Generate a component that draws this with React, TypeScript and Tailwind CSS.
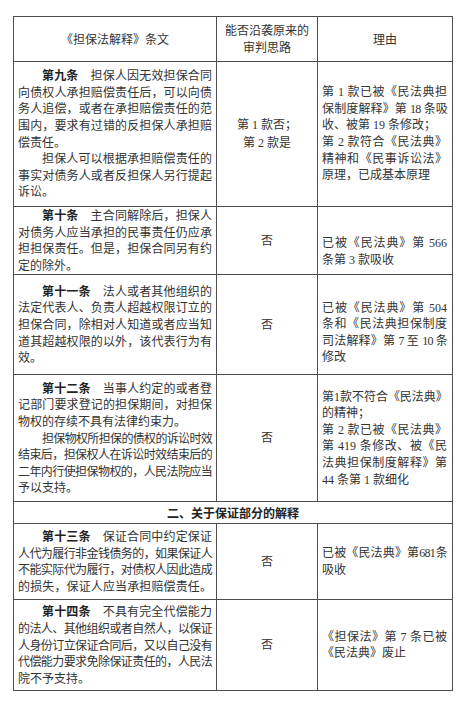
import React from 'react';

const serif = "font-['Liberation_Serif','Noto_Sans_CJK_SC',serif]";
const sans = "font-['Noto_Sans_CJK_SC','Noto_Sans',sans-serif]";

type LineProps = {
  children: React.ReactNode;
  j?: boolean;
  tight?: boolean;
  indent?: boolean;
};

// one printed line of the cell, justified to the cell edges
const L = ({ children, j = true, tight = false, indent = false }: LineProps) => (
  <div
    className={`${j ? 'text-justify [text-align-last:justify]' : 'text-left'} ${tight ? 'tracking-[-0.8px]' : ''} ${indent ? 'pl-[24px]' : ''}`}
  >
    {children}
  </div>
);

const Label = ({ children }: { children: React.ReactNode }) => (
  <span className={`${sans} font-bold text-[#222]`}>{children}</span>
);

const cell = 'border border-[#4d4d4d] align-middle';
const textCell = `${cell} pl-[4px] pr-[4px] text-[12px] leading-[16.6px] text-[#333]`;
const midCell = `${cell} text-center text-[12px] leading-[18px] text-[#333]`;

const App = () => {
  return (
    <div className="w-[462px] h-[701px] bg-white pt-[16px] pl-[13px]">
      <table className={`table-fixed border-collapse w-[439px] ${serif}`}>
        <colgroup>
          <col className="w-[203px]" />
          <col className="w-[101px]" />
          <col className="w-[135px]" />
        </colgroup>
        <tbody>
          {/* header */}
          <tr className="h-[45px]">
            <td className={`${cell} ${sans} text-center text-[12px] text-[#333]`}>《担保法解释》条文</td>
            <td className={`${cell} ${sans} text-center text-[12px] leading-[16.7px] text-[#333]`}>
              能否沿袭原来的
              <br />
              审判思路
            </td>
            <td className={`${cell} ${sans} text-center text-[12px] text-[#333]`}>理由</td>
          </tr>

          {/* 第九条 */}
          <tr className="h-[145px]">
            <td className={textCell}>
              <L indent>
                <Label>第九条</Label>　担保人因无效担保合同
              </L>
              <L>向债权人承担赔偿责任后，可以向债</L>
              <L>务人追偿，或者在承担赔偿责任的范</L>
              <L>围内，要求有过错的反担保人承担赔</L>
              <L j={false}>偿责任。</L>
              <L indent>担保人可以根据承担赔偿责任的</L>
              <L>事实对债务人或者反担保人另行提起</L>
              <L j={false}>诉讼。</L>
            </td>
            <td className={midCell}>
              第 1 款否；
              <br />
              第 2 款是
            </td>
            <td className={`${textCell} pr-[5px]`}>
              <L>第 1 款已被《民法典担</L>
              <L tight>保制度解释》第 18 条吸</L>
              <L j={false}>收、被第 19 条修改；</L>
              <L>第 2 款符合《民法典》</L>
              <L>精神和《民事诉讼法》</L>
              <L j={false}>原理，已成基本原理</L>
            </td>
          </tr>

          {/* 第十条 */}
          <tr className="h-[65px]">
            <td className={textCell}>
              <L indent>
                <Label>第十条</Label>　主合同解除后，担保人
              </L>
              <L>对债务人应当承担的民事责任仍应承</L>
              <L>担担保责任。但是，担保合同另有约</L>
              <L j={false}>定的除外。</L>
            </td>
            <td className={midCell}>否</td>
            <td className={`${textCell} pr-[5px] pt-[22px]`}>
              <L>已被《民法典》第 566</L>
              <L j={false}>条第 3 款吸收</L>
            </td>
          </tr>

          {/* 第十一条 */}
          <tr className="h-[100px]">
            <td className={textCell}>
              <L indent>
                <Label>第十一条</Label>　法人或者其他组织的
              </L>
              <L>法定代表人、负责人超越权限订立的</L>
              <L>担保合同，除相对人知道或者应当知</L>
              <L>道其超越权限的以外，该代表行为有</L>
              <L j={false}>效。</L>
            </td>
            <td className={midCell}>否</td>
            <td className={`${textCell} pr-[5px] pt-[16px]`}>
              <L>已被《民法典》第 504</L>
              <L>条和《民法典担保制度</L>
              <L tight>司法解释》第 7 至 10 条</L>
              <L j={false}>修改</L>
            </td>
          </tr>

          {/* 第十二条 */}
          <tr className="h-[127px]">
            <td className={textCell}>
              <L indent>
                <Label>第十二条</Label>　当事人约定的或者登
              </L>
              <L>记部门要求登记的担保期间，对担保</L>
              <L j={false}>物权的存续不具有法律约束力。</L>
              <L indent tight>担保物权所担保的债权的诉讼时效</L>
              <L tight>结束后，担保权人在诉讼时效结束后的</L>
              <L tight>二年内行使担保物权的，人民法院应当</L>
              <L j={false}>予以支持。</L>
            </td>
            <td className={midCell}>否</td>
            <td className={`${textCell} pr-[5px]`}>
              <L tight>第1款不符合《民法典》</L>
              <L j={false}>的精神；</L>
              <L>第 2 款已被《民法典》</L>
              <L>第 419 条修改、被《民</L>
              <L>法典担保制度解释》第</L>
              <L j={false}>44 条第 1 款细化</L>
            </td>
          </tr>

          {/* section */}
          <tr className="h-[22px]">
            <td colSpan={3} className={`${cell} ${sans} text-center text-[12px] font-bold text-[#222]`}>
              二、关于保证部分的解释
            </td>
          </tr>

          {/* 第十三条 */}
          <tr className="h-[76px]">
            <td className={textCell}>
              <L indent>
                <Label>第十三条</Label>　保证合同中约定保证
              </L>
              <L tight>人代为履行非金钱债务的，如果保证人</L>
              <L tight>不能实际代为履行，对债权人因此造成</L>
              <L>的损失，保证人应当承担赔偿责任。</L>
            </td>
            <td className={midCell}>否</td>
            <td className={`${textCell} pr-[5px]`}>
              <L tight>已被《民法典》第681条</L>
              <L j={false}>吸收</L>
            </td>
          </tr>

          {/* 第十四条 */}
          <tr className="h-[91px]">
            <td className={textCell}>
              <L indent>
                <Label>第十四条</Label>　不具有完全代偿能力
              </L>
              <L tight>的法人、其他组织或者自然人，以保证</L>
              <L tight>人身份订立保证合同后，又以自己没有</L>
              <L tight>代偿能力要求免除保证责任的，人民法</L>
              <L j={false}>院不予支持。</L>
            </td>
            <td className={midCell}>否</td>
            <td className={`${textCell} pr-[5px]`}>
              <L>《担保法》第 7 条已被</L>
              <L j={false}>《民法典》废止</L>
            </td>
          </tr>
        </tbody>
      </table>
    </div>
  );
};

export default App;
